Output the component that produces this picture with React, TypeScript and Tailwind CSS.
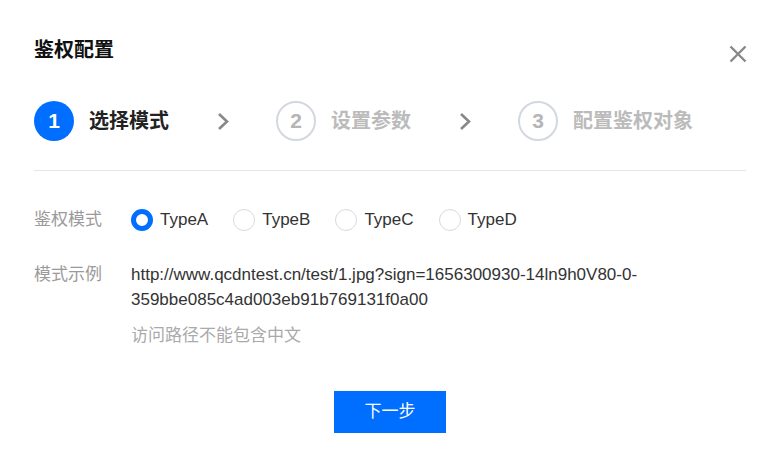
import { useState } from "react";

const FONT = '"Liberation Sans", "Noto Sans CJK SC", sans-serif';

const steps = [
  { no: 1, label: "选择模式" },
  { no: 2, label: "设置参数" },
  { no: 3, label: "配置鉴权对象" },
];

const types = ["TypeA", "TypeB", "TypeC", "TypeD"];

function Chevron() {
  return (
    <svg width="12" height="19" viewBox="0 0 12 19" className="shrink-0">
      <polyline
        points="2,2 10,9.5 2,17"
        fill="none"
        stroke="#888888"
        strokeWidth="2.6"
      />
    </svg>
  );
}

export default function App() {
  // 当前只展示第一步，选中的鉴权模式默认是 TypeA
  const [current] = useState(1);
  const [mode, setMode] = useState("TypeA");

  return (
    <div
      className="relative h-[469px] w-[776px] overflow-hidden bg-white pl-[34px] pr-[30px] pt-[36px]"
      style={{ fontFamily: FONT }}
    >
      <h1 className="text-[20px] font-bold leading-[28px] text-[#111]">鉴权配置</h1>

      <button className="absolute right-[28px] top-[44px] flex h-[20px] w-[20px] items-center justify-center">
        <svg width="20" height="20" viewBox="0 0 20 20">
          <path d="M2.5 2.5 L17.5 17.5 M17.5 2.5 L2.5 17.5" stroke="#888888" strokeWidth="2.4" />
        </svg>
      </button>

      {/* 步骤条 */}
      <div className="mt-[37px] flex h-[40px] items-center">
        {steps.map((s, i) => {
          const active = s.no === current;
          return (
            <div key={s.no} className="flex items-center">
              <div
                className={`flex h-[40px] w-[40px] items-center justify-center rounded-full text-[21px] font-bold ${
                  active
                    ? "bg-[#006eff] text-white"
                    : "border-2 border-[#d3d8e0] text-[#b5b5b5]"
                }`}
              >
                {s.no}
              </div>
              <span
                className={`ml-[15px] text-[20px] font-bold ${
                  active ? "text-[#222]" : "text-[#bbbbbb]"
                }`}
              >
                {s.label}
              </span>
              {i < steps.length - 1 ? (
                <div className="ml-[48px] mr-[47px]">
                  <Chevron />
                </div>
              ) : null}
            </div>
          );
        })}
      </div>

      <div className="mt-[29px] h-px bg-[#e5e5e5]" />

      {/* 鉴权模式 */}
      <div className="mt-[37px] flex items-center text-[17px] leading-[24px]">
        <div className="w-[97px] shrink-0 text-[#9a9a9a]">鉴权模式</div>
        <div className="flex items-center gap-[25px]">
          {types.map((t) => {
            const checked = t === mode;
            return (
              <label
                key={t}
                className="flex cursor-pointer items-center gap-[7px] text-[#333]"
                onClick={() => setMode(t)}
              >
                <span
                  className={`h-[22px] w-[22px] rounded-full ${
                    checked ? "border-[5px] border-[#006eff]" : "border border-[#d6dae2]"
                  }`}
                />
                {t}
              </label>
            );
          })}
        </div>
      </div>

      {/* 模式示例 */}
      <div className="mt-[30px] flex text-[17px] leading-[25px]">
        <div className="w-[97px] shrink-0 text-[#9a9a9a]">模式示例</div>
        <div>
          <div className="w-[560px] break-words text-[#333]">
            http://www.qcdntest.cn/test/1.jpg?sign=1656300930-14ln9h0V80-0-
            <br />
            359bbe085c4ad003eb91b769131f0a00
          </div>
          <div className="mt-[12px] leading-[24px] text-[#aaaaaa]">访问路径不能包含中文</div>
        </div>
      </div>

      <div className="mt-[43px] flex justify-center">
        <button className="h-[42px] w-[112px] bg-[#006eff] text-[17px] text-white">下一步</button>
      </div>
    </div>
  );
}
